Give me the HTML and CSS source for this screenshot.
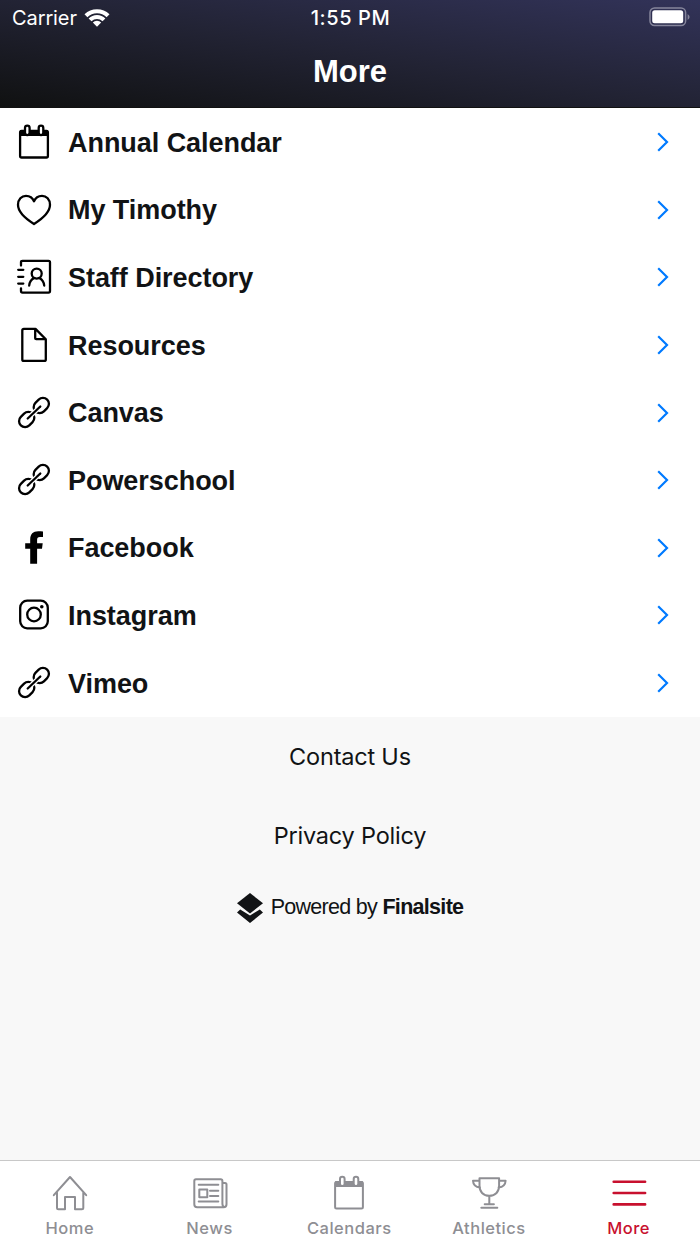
FILE: index.html
```
<!DOCTYPE html>
<html lang="en">
<head>
  <meta charset="UTF-8">
  <meta name="viewport" content="width=device-width, initial-scale=1.0">
  <title>More</title>
  <link rel="stylesheet" href="styles.css">
</head>
<body>

  <!-- Shared icons -->
  <svg class="sprite" width="0" height="0">
    <symbol id="calendar" viewBox="0 0 36 36">
      <rect x="4.1" y="7" width="27.8" height="26.5" rx="1.5"/>
      <path class="solid" d="M4 6.2h28v5.8H4z"/>
      <rect class="pin" x="9" y="1.7" width="4.6" height="9.4" rx="2.3"/>
      <rect class="pin" x="22.7" y="1.7" width="4.6" height="9.4" rx="2.3"/>
    </symbol>
    <symbol id="link" viewBox="0 0 36 36">
      <rect x="2.4" y="18.5" width="16.6" height="12" rx="6" transform="rotate(-45 10.7 24.5)"/>
      <rect x="17" y="4.5" width="16.6" height="12" rx="6" transform="rotate(-45 25.3 10.5)"/>
      <path class="gap" d="M13.3 22l9.400-9"/>
      <path d="M11.700 23.500l12.600-12"/>
    </symbol>
    <symbol id="chevron" viewBox="0 0 12 20">
      <path d="M1.2 1.2l8.800 8.800-8.800 8.800"/>
    </symbol>
  </svg>

  <header>
    <div class="status">
      <div class="carrier">
        <span>Carrier</span>
        <svg class="wifi" viewBox="0 0 26 19">
          <path d="M.5 6.200a18 18 0 0 1 25 0l-2.900 3a13.800 13.800 0 0 0-19.200 0z"/>
          <path d="M4.600 10.400a11.800 11.800 0 0 1 16.800 0l-2.900 2.900a8 8 0 0 0-11 0z"/>
          <path d="M8.800 14.600a5.900 5.900 0 0 1 8.400 0l-4.200 4.200z"/>
        </svg>
      </div>
      <div class="time">1:55 PM</div>
      <svg class="battery" viewBox="0 0 42 20">
        <rect class="shell" x="1" y="1" width="35.6" height="17.6" rx="4.5"/>
        <rect class="charge" x="3.2" y="3.3" width="31" height="13" rx="2.5"/>
        <path class="cap" d="M38.6 7q4 2.800 0 6z"/>
      </svg>
    </div>
    <h1>More</h1>
  </header>

  <main>
    <ul class="menu">
      <li>
        <svg class="icon"><use href="#calendar"/></svg>
        <span>Annual Calendar</span>
        <svg class="chevron"><use href="#chevron"/></svg>
      </li>
      <li>
        <svg class="icon" viewBox="0 0 36 36"><path d="M18 32C10 27 2 21 2 12.800 2 7.600 5.600 3.800 10 3.800c3.600 0 6.600 2 8 5.400 1.400-3.400 4.400-5.400 8-5.400 4.400 0 8 3.800 8 9C34 21 26 27 18 32z"/></svg>
        <span>My Timothy</span>
        <svg class="chevron"><use href="#chevron"/></svg>
      </li>
      <li>
        <svg class="icon" viewBox="0 0 36 36">
          <path d="M5 6.500V3.300q0-1.500 1.500-1.500h26q1.500 0 1.500 1.500v28.800q0 1.500-1.500 1.500h-26q-1.500 0-1.500-1.500v-2.800M2.200 10.800H7.300M2.200 17.800H7.300M2.200 24.600H7.300"/>
          <circle cx="20.700" cy="14.600" r="5"/>
          <path d="M13.200 26.500c.3-3.200 2-5.700 4.800-7.400M28.200 26.500c-.3-3.200-2-5.700-4.800-7.400"/>
        </svg>
        <span>Staff Directory</span>
        <svg class="chevron"><use href="#chevron"/></svg>
      </li>
      <li>
        <svg class="icon" viewBox="0 0 36 36"><path d="M7.800 1.900H19.500L29.800 12.200v20.200q0 1.500-1.500 1.500H7.800q-1.500 0-1.500-1.500v-29q0-1.500 1.500-1.500zM19.200 2v9.200q0 1 1 1h9.400"/></svg>
        <span>Resources</span>
        <svg class="chevron"><use href="#chevron"/></svg>
      </li>
      <li>
        <svg class="icon"><use href="#link"/></svg>
        <span>Canvas</span>
        <svg class="chevron"><use href="#chevron"/></svg>
      </li>
      <li>
        <svg class="icon"><use href="#link"/></svg>
        <span>Powerschool</span>
        <svg class="chevron"><use href="#chevron"/></svg>
      </li>
      <li>
        <svg class="icon" viewBox="0 0 36 36"><path class="logo" d="M14.200 33.700V18.800H9.200v-5.500h5V9.500c0-5.300 2.800-8.200 8-8.200 1.800 0 3.500.1 4.800.3v5.300h-3c-2.300 0-2.900 1.200-2.900 3.100v3.300h5.600l-.7 5.500h-4.900v14.900z"/></svg>
        <span>Facebook</span>
        <svg class="chevron"><use href="#chevron"/></svg>
      </li>
      <li>
        <svg class="icon" viewBox="0 0 36 36">
          <rect x="4.200" y="3.700" width="27.600" height="27.600" rx="7"/>
          <circle cx="18" cy="17.500" r="6.800"/>
          <circle class="logo" cx="25.800" cy="9.700" r="1.800"/>
        </svg>
        <span>Instagram</span>
        <svg class="chevron"><use href="#chevron"/></svg>
      </li>
      <li>
        <svg class="icon"><use href="#link"/></svg>
        <span>Vimeo</span>
        <svg class="chevron"><use href="#chevron"/></svg>
      </li>
    </ul>

    <div class="links">
      <a>Contact Us</a>
      <a>Privacy Policy</a>
      <div class="powered">
        <svg class="layers" viewBox="0 0 26 30">
          <path d="M13 0l13 10.200L13 20.400 0 10.200z"/>
          <path d="M3.200 16.600L13 22.400l9.800-5.800L26 19.600 13 30 0 19.600z"/>
        </svg>
        <span>Powered by <b>Finalsite</b></span>
      </div>
    </div>
  </main>

  <nav>
    <div class="tab">
      <svg class="icon" viewBox="0 0 36 36"><path d="M1.800 20.200L18 2l16.200 18.200M5 17.200v15.600q0 1.500 1.500 1.500H13V22h10v12.300h6.800q1.500 0 1.500-1.500V17.200"/></svg>
      <span>Home</span>
    </div>
    <div class="tab">
      <svg class="icon" viewBox="0 0 36 36"><path d="M31 8h2q1.500 0 1.500 1.500v19.800q0 2.900-2.900 2.900H5.200q-2.900 0-2.900-2.900V6q0-1.700 1.700-1.700h24.700q1.700 0 1.700 1.700v22.500q0 3.300 2 3.500M6.700 9.800h19.600M18 15.700h8.300M18 20.900h8.300M6.700 26.500h19.600M7.300 14.400h8v7.800h-8z"/></svg>
      <span>News</span>
    </div>
    <div class="tab">
      <svg class="icon"><use href="#calendar"/></svg>
      <span>Calendars</span>
    </div>
    <div class="tab">
      <svg class="icon" viewBox="0 0 36 36"><path d="M8.500 3.200h19.600v7.600c0 5.800-3.600 10-9.800 10s-9.800-4.200-9.800-10zM8.500 5.700H2c.2 4 2.500 6.300 7 6.700M28.100 5.700h6.500c-.2 4-2.500 6.300-7 6.700M18.300 21v8.300M13.700 29.300h9.200M10.300 32.700h16"/></svg>
      <span>Athletics</span>
    </div>
    <div class="tab active">
      <svg class="icon" viewBox="0 0 36 36"><path d="M2.700 6.700h31.400M2.700 18h31.400M2.700 29.400h31.400"/></svg>
      <span>More</span>
    </div>
  </nav>

</body>
</html>
```
FILE: styles.css
```
* {
  box-sizing: border-box;
}
body {
  margin: 0;
  height: 1244px;
  display: flex;
  flex-direction: column;
  font-family: Inter, sans-serif;
  background-color: #f8f8f8;
  color: #111315;
}
.sprite {
  display: none;
}
header {
  height: 108px;
  background: linear-gradient(to top right, #101111, #222334 50%, #323359);
  border-bottom: 1px solid #111;
  color: #fff;
}
.status {
  display: grid;
  grid-template-columns: 1fr auto 1fr;
  align-items: center;
  height: 36px;
  padding: 0 9px 0 12px;
  font-size: 20px;
}
.carrier {
  display: flex;
  align-items: center;
  gap: 7px;
  letter-spacing: -0.1px;
}
.wifi {
  width: 26px;
  height: 19px;
  margin-top: -2px;
  fill: #fff;
}
.time {
  margin-left: -2px;
  font-weight: 500;
  letter-spacing: 0.6px;
}
.battery {
  width: 42px;
  height: 20px;
  margin-top: -2px;
  justify-self: end;
}
.battery .shell {
  fill: none;
  stroke: #85859b;
  stroke-width: 1.5;
}
.battery .charge {
  fill: #fff;
}
.battery .cap {
  fill: #85859b;
}
h1 {
  margin: 0;
  font-family: "Liberation Sans", Arial, sans-serif;
  font-size: 31px;
  line-height: 72px;
  text-align: center;
}
.menu {
  margin: 0;
  padding: 0.5px 0 0;
  list-style: none;
  background-color: #fff;
}
.menu li {
  display: flex;
  align-items: center;
  height: 67.6px;
  padding: 0 31px 0 16px;
  font-family: "Liberation Sans", Arial, sans-serif;
  font-size: 27px;
  font-weight: bold;
}
.menu span {
  flex: 1;
  margin-left: 16px;
  padding-top: 2px;
  letter-spacing: -0.05px;
}
.icon {
  width: 36px;
  height: 36px;
  fill: none;
  stroke: currentColor;
  stroke-width: 2;
  stroke-linecap: round;
  stroke-linejoin: round;
}
.menu .icon {
  color: #000;
  stroke-width: 2.3;
}
.solid {
  fill: currentColor;
  stroke: none;
}
.pin {
  fill: #fff;
}
.gap {
  stroke: #fff;
  stroke-width: 4.8;
  stroke-linecap: butt;
}
.logo {
  fill: #000;
  stroke: none;
}
.chevron {
  width: 12px;
  height: 20px;
  fill: none;
  stroke: #007aff;
  stroke-width: 2.2;
}
.links {
  display: flex;
  flex-direction: column;
  align-items: center;
  padding-top: 25px;
}
.links a {
  height: 30px;
  margin-bottom: 49.5px;
  font-size: 23.5px;
  line-height: 30px;
  letter-spacing: -0.2px;
}
.powered {
  display: flex;
  align-items: center;
  gap: 8px;
  margin-top: -8px;
  font-family: "Liberation Sans", Arial, sans-serif;
  font-size: 21.5px;
  letter-spacing: -0.7px;
}
.layers {
  width: 26px;
  height: 30px;
  fill: #111315;
}
nav {
  display: flex;
  height: 84px;
  margin-top: auto;
  padding-right: 1.5px;
  border-top: 1px solid #c8c8c8;
  background-color: #fff;
}
.tab {
  flex: 1;
  display: flex;
  flex-direction: column;
  align-items: center;
  padding-top: 14px;
  color: #8e8e93;
  font-size: 16.5px;
  font-weight: 500;
  line-height: 20px;
  letter-spacing: 0.5px;
}
.tab span {
  margin-top: 7px;
}
.tab.active {
  color: #c8102e;
}
.active .icon {
  stroke-width: 2.6;
}
```
